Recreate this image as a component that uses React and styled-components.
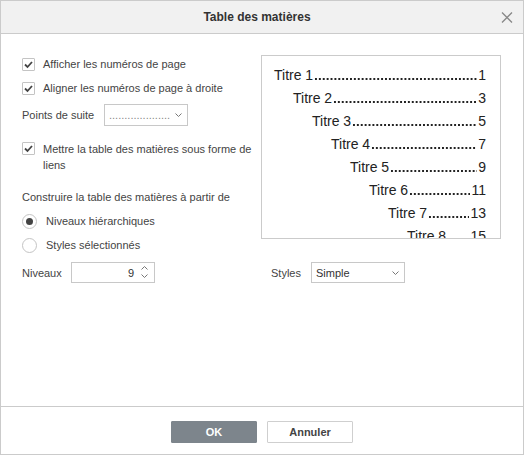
import React from "react";
import styled, { createGlobalStyle } from "styled-components";

const GlobalStyle = createGlobalStyle`
  body {
    margin: 0;
    font-family: "Liberation Sans", Arial, sans-serif;
    background: #fff;
  }
`;

const Dialog = styled.div`
  width: 524px;
  height: 455px;
  box-sizing: border-box;
  border: 1px solid #cbcbcb;
  display: flex;
  flex-direction: column;
  background: #fff;
  color: #444;
  font-size: 11px;
`;

const Header = styled.div`
  height: 32px;
  background: #f1f1f1;
  border-bottom: 1px solid #cbcbcb;
  display: grid;
  grid-template-columns: 1fr auto 1fr;
  align-items: center;
  padding-right: 10px;
`;

const Title = styled.div`
  grid-column: 2;
  font-size: 12px;
  font-weight: bold;
  color: #333;
`;

const Close = styled.div`
  grid-column: 3;
  justify-self: end;
  display: flex;
  padding-top: 1px;
`;

const Body = styled.div`
  flex: 1;
  padding: 21px 20px 0 21px;
  display: grid;
  grid-template-columns: 232px 240px;
  column-gap: 7px;
  row-gap: 8px;
  align-content: start;
  align-items: start;
`;

const Stack = styled.div`
  display: flex;
  flex-direction: column;
`;

const CheckRow = styled.div`
  display: flex;
  align-items: ${(p) => (p.multi ? "flex-start" : "center")};
  min-height: 18px;
  gap: 8px;
  margin-top: ${(p) => p.mt || 0}px;
`;

const Box = styled.span`
  width: 13px;
  height: 13px;
  flex: none;
  box-sizing: border-box;
  border: 1px solid #c4c4c4;
  border-radius: 1px;
  background: #fff;
  display: flex;
  align-items: center;
  justify-content: center;
  margin-top: ${(p) => (p.multi ? 1 : 0)}px;
`;

const Label = styled.span`
  line-height: 16px;
  max-width: ${(p) => p.max || "none"};
`;

const FieldRow = styled.div`
  display: flex;
  align-items: center;
  margin-top: ${(p) => p.mt || 0}px;
  padding-left: ${(p) => p.pl || 0}px;
`;

const FieldLabel = styled.span`
  width: ${(p) => p.w}px;
  flex: none;
`;

const Select = styled.div`
  width: ${(p) => p.w}px;
  height: ${(p) => p.h || 21}px;
  box-sizing: border-box;
  border: 1px solid #c8c8c8;
  background: #fff;
  display: flex;
  align-items: center;
  padding: 0 5px 0 4px;
  color: ${(p) => (p.muted ? "#888" : "#333")};
`;

const SelectText = styled.span`
  flex: 1;
  white-space: nowrap;
`;

const Section = styled.div`
  line-height: 16px;
  margin-top: 16px;
`;

const RadioRow = styled.div`
  display: flex;
  align-items: center;
  height: 18px;
  gap: 9px;
  margin-top: ${(p) => p.mt || 0}px;
`;

const Circle = styled.span`
  width: 15px;
  height: 15px;
  box-sizing: border-box;
  border-radius: 50%;
  border: 1px solid #c4c4c4;
  display: flex;
  align-items: center;
  justify-content: center;
  &::after {
    content: "";
    width: 7px;
    height: 7px;
    border-radius: 50%;
    background: ${(p) => (p.on ? "#444" : "transparent")};
  }
`;

const Spin = styled.div`
  width: 84px;
  height: 21px;
  box-sizing: border-box;
  border: 1px solid #c8c8c8;
  display: flex;
  align-items: center;
  justify-content: flex-end;
  padding-right: 6px;
  gap: 7px;
  color: #333;
`;

const Arrows = styled.div`
  display: flex;
  flex-direction: column;
  gap: 4px;
  margin-top: -2px;
`;

const Preview = styled.div`
  height: 184px;
  box-sizing: border-box;
  border: 1px solid #cbcbcb;
  padding: 7px 14px 0 12px;
  overflow: hidden;
  font-size: 14px;
  color: #222;
`;

const TocLine = styled.div`
  display: flex;
  height: 23px;
  align-items: center;
  padding-left: ${(p) => p.level * 19}px;
  white-space: nowrap;
`;

const Leader = styled.span`
  flex: 1;
  align-self: flex-end;
  height: 2px;
  margin: 0 1px 6px 1px;
  background-image: radial-gradient(circle, #222 0.75px, transparent 1.05px);
  background-size: 3.9px 2px;
  background-repeat: repeat-x;
`;

const Footer = styled.div`
  height: 48px;
  border-top: 1px solid #cbcbcb;
  display: flex;
  justify-content: center;
  align-items: flex-start;
  padding-top: 14px;
  box-sizing: border-box;
  gap: 10px;
`;

const Button = styled.button`
  width: 86px;
  height: 22px;
  box-sizing: border-box;
  font-family: inherit;
  font-size: 11px;
  font-weight: bold;
  border-radius: 1px;
  border: 1px solid ${(p) => (p.primary ? "#7d858c" : "#cfcfcf")};
  background: ${(p) => (p.primary ? "#7d858c" : "#fff")};
  color: ${(p) => (p.primary ? "#fff" : "#444")};
  padding: 0;
`;

const Chevron = ({ up }) => (
  <svg width="7" height="4" viewBox="0 0 7 4">
    <polyline
      points={up ? "0.5,3.5 3.5,0.5 6.5,3.5" : "0.5,0.5 3.5,3.5 6.5,0.5"}
      fill="none"
      stroke="#777"
      strokeWidth="1"
    />
  </svg>
);

const Check = () => (
  <svg width="11" height="11" viewBox="0 0 11 11">
    <polyline
      points="2,5.5 4.5,8 9,3"
      fill="none"
      stroke="#444"
      strokeWidth="1.8"
    />
  </svg>
);

const CheckItem = ({ children, multi, mt, max }) => (
  <CheckRow multi={multi} mt={mt}>
    <Box multi={multi}>
      <Check />
    </Box>
    <Label max={max}>{children}</Label>
  </CheckRow>
);

const toc = [
  ["Titre 1", 1],
  ["Titre 2", 3],
  ["Titre 3", 5],
  ["Titre 4", 7],
  ["Titre 5", 9],
  ["Titre 6", 11],
  ["Titre 7", 13],
  ["Titre 8", 15],
];

export default function App() {
  return (
    <>
      <GlobalStyle />
      <Dialog>
        <Header>
          <Title>Table des matières</Title>
          <Close>
            <svg width="12" height="11" viewBox="0 0 12 11">
              <path d="M1 0.5 L11 10.5 M11 0.5 L1 10.5" stroke="#888" strokeWidth="1.3" />
            </svg>
          </Close>
        </Header>
        <Body>
          <Stack>
            <CheckItem>Afficher les numéros de page</CheckItem>
            <CheckItem mt={6}>Aligner les numéros de page à droite</CheckItem>
            <FieldRow mt={7}>
              <FieldLabel w={82}>Points de suite</FieldLabel>
              <Select w={84} h={22} muted>
                <SelectText>....................</SelectText>
                <Chevron />
              </Select>
            </FieldRow>
            <CheckItem multi mt={15} max="212px">
              Mettre la table des matières sous forme de liens
            </CheckItem>
            <Section>Construire la table des matières à partir de</Section>
            <RadioRow mt={7}>
              <Circle on />
              <span>Niveaux hiérarchiques</span>
            </RadioRow>
            <RadioRow mt={6}>
              <Circle />
              <span>Styles sélectionnés</span>
            </RadioRow>
          </Stack>
          <Preview>
            {toc.map(([name, page], i) => (
              <TocLine key={name} level={i}>
                <span>{name}</span>
                <Leader />
                <span>{page}</span>
              </TocLine>
            ))}
          </Preview>
          <FieldRow>
            <FieldLabel w={49}>Niveaux</FieldLabel>
            <Spin>
              <span>9</span>
              <Arrows>
                <Chevron up />
                <Chevron />
              </Arrows>
            </Spin>
          </FieldRow>
          <FieldRow pl={10}>
            <FieldLabel w={40}>Styles</FieldLabel>
            <Select w={94}>
              <SelectText>Simple</SelectText>
              <Chevron />
            </Select>
          </FieldRow>
        </Body>
        <Footer>
          <Button primary>OK</Button>
          <Button>Annuler</Button>
        </Footer>
      </Dialog>
    </>
  );
}
